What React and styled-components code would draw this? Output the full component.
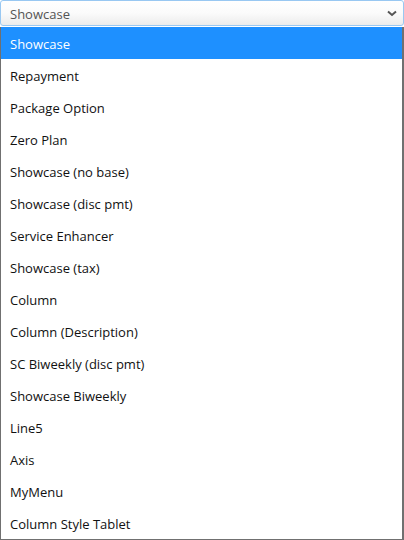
import React from "react";
import styled, { createGlobalStyle } from "styled-components";

const GlobalStyle = createGlobalStyle`
  html, body {
    margin: 0;
    padding: 0;
    background: #fff;
  }
  body {
    font-family: "Open Sans", "Noto Sans", sans-serif;
    font-size: 13px;
  }
`;

const Wrapper = styled.div`
  display: flex;
  flex-direction: column;
  width: 404px;
  height: 540px;
  overflow: hidden;
`;

const Trigger = styled.div`
  display: flex;
  align-items: center;
  justify-content: space-between;
  box-sizing: border-box;
  height: 26px;
  padding: 1px 6px 0 9px;
  border: 1px solid #99c8f2;
  border-radius: 3px;
  background: linear-gradient(#ffffff 0%, #fbfbfb 50%, #ececec 100%);
  color: #545454;
  font-size: 13px;
`;

const Listbox = styled.ul`
  list-style: none;
  margin: 1px 0 0 0;
  padding: 0;
  box-sizing: border-box;
  flex: 1;
  border: 1px solid #707070;
  border-top: none;
  border-right-width: 2px;
  background: #fff;
`;

const Option = styled.li`
  display: flex;
  align-items: center;
  box-sizing: border-box;
  height: 32px;
  padding: 2px 0 0 9px;
  color: ${(p) => (p.$active ? "#ffffff" : "#111")};
  background: ${(p) => (p.$active ? "#1e90ff" : "transparent")};
  white-space: nowrap;
`;

const options = [
  "Showcase",
  "Repayment",
  "Package Option",
  "Zero Plan",
  "Showcase (no base)",
  "Showcase (disc pmt)",
  "Service Enhancer",
  "Showcase (tax)",
  "Column",
  "Column (Description)",
  "SC Biweekly (disc pmt)",
  "Showcase Biweekly",
  "Line5",
  "Axis",
  "MyMenu",
  "Column Style Tablet",
];

const Chevron = () => (
  <svg width="10" height="7" viewBox="0 0 10 7">
    <path d="M1 1.5 L5 5 L9 1.5" fill="none" stroke="#555" strokeWidth="2" />
  </svg>
);

export default function App() {
  const selected = "Showcase";
  return (
    <>
      <GlobalStyle />
      <Wrapper>
        <Trigger>
          <span>{selected}</span>
          <Chevron />
        </Trigger>
        <Listbox>
          {options.map((o) => (
            <Option key={o} $active={o === selected}>
              {o}
            </Option>
          ))}
        </Listbox>
      </Wrapper>
    </>
  );
}
